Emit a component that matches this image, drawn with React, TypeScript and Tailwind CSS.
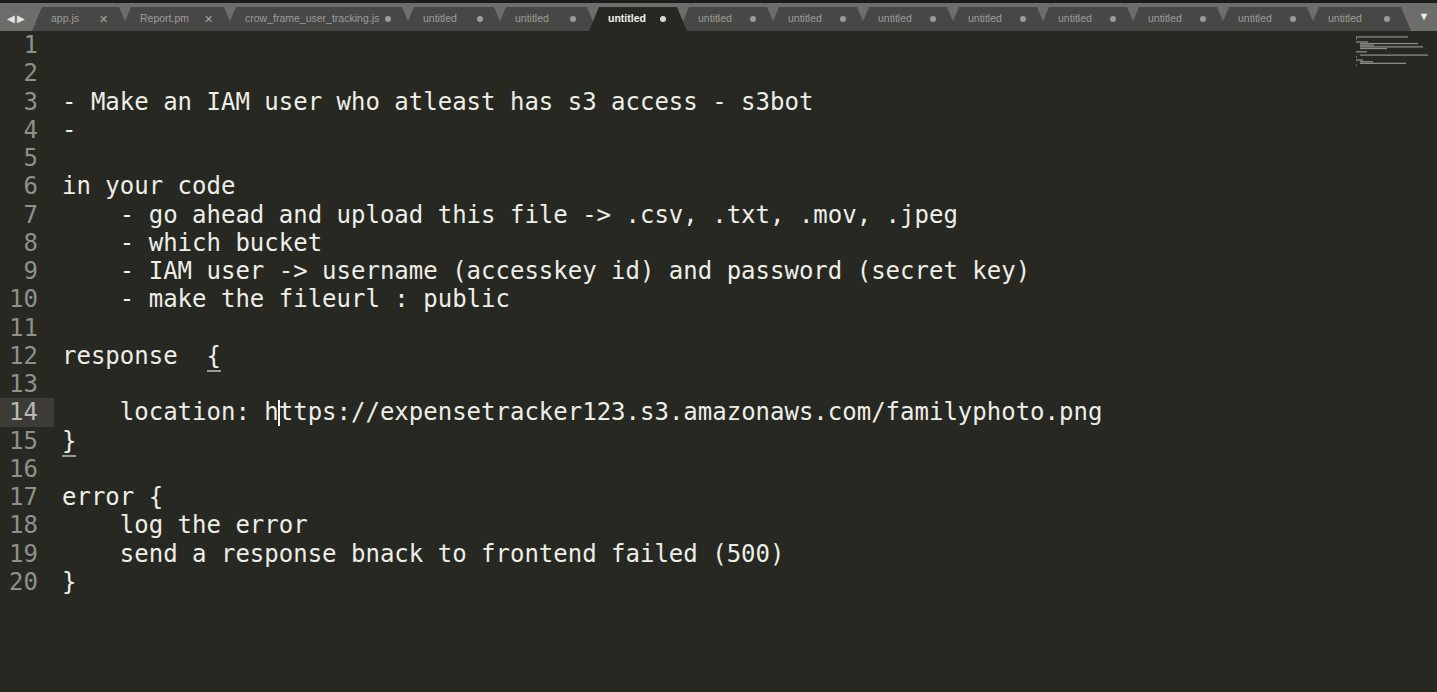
import React from 'react';

type Tab = { label: string; width: number; mark: 'x' | 'dot'; active?: boolean };

const tabs: Tab[] = [
    { label: 'app.js', width: 97, mark: 'x' },
    { label: 'Report.pm', width: 113, mark: 'x' },
    { label: 'crow_frame_user_tracking.js', width: 186, mark: 'dot' },
    { label: 'untitled', width: 100, mark: 'dot' },
    { label: 'untitled', width: 101, mark: 'dot' },
    { label: 'untitled', width: 98, mark: 'dot', active: true },
    { label: 'untitled', width: 98, mark: 'dot' },
    { label: 'untitled', width: 98, mark: 'dot' },
    { label: 'untitled', width: 98, mark: 'dot' },
    { label: 'untitled', width: 98, mark: 'dot' },
    { label: 'untitled', width: 98, mark: 'dot' },
    { label: 'untitled', width: 98, mark: 'dot' },
    { label: 'untitled', width: 98, mark: 'dot' },
    { label: 'untitled', width: 102, mark: 'dot' },
];

const lines = [
    '',
    '',
    '- Make an IAM user who atleast has s3 access - s3bot',
    '-',
    '',
    'in your code',
    '    - go ahead and upload this file -> .csv, .txt, .mov, .jpeg',
    '    - which bucket',
    '    - IAM user -> username (accesskey id) and password (secret key)',
    '    - make the fileurl : public',
    '',
    'response  {',
    '',
    '    location: https://expensetracker123.s3.amazonaws.com/familyphoto.png',
    '}',
    '',
    'error {',
    '    log the error',
    '    send a response bnack to frontend failed (500)',
    '}',
];

const TabItem = ({ tab, first }: { tab: Tab; first: boolean }) => (
    <div
        style={{ width: tab.width }}
        className={`relative flex h-[24px] shrink-0 items-center justify-between pl-[19px] pr-[21px] [clip-path:polygon(10px_0,calc(100%_-_10px)_0,100%_100%,0_100%)] ${first ? '' : '-ml-[8px]'} ${tab.active
            ? 'z-10 bg-[#272822] font-bold text-[#f2f2f2]'
            : 'bg-[#474745] text-[#9c9c9a]'
            }`}
    >
        <span className="truncate">{tab.label}</span>
        {tab.mark === 'x' ? (
            <span className="text-[11px] leading-none text-[#a5a5a3]">✕</span>
        ) : (
            <span className={`h-[6px] w-[6px] rounded-full ${tab.active ? 'bg-[#d8d8d6]' : 'bg-[#9a9a98]'}`} />
        )}
    </div>
);

const Minimap = () => (
    <svg width="80" height="40" viewBox="0 0 80 40" className="absolute right-[1px] top-[2px]">
        {lines.map((line, i) => {
            const lead = line.length - line.trimStart().length;
            const len = line.trim().length;
            if (!len) return null;
            return (
                <rect
                    key={i}
                    x={lead}
                    y={i * 1.65}
                    width={len}
                    height={1.3}
                    fill="#a4a49e"
                    opacity={0.8}
                />
            );
        })}
    </svg>
);

export default function App() {
    return (
        <div className="h-[692px] w-[1437px] overflow-hidden bg-[#272822]">
            {/* tab strip */}
            <div className="h-[31px] border-t-[3px] border-[#1c1c1b] bg-[#6d6d6b] text-[10.5px] font-['Liberation_Sans',sans-serif]">
                <div className="flex h-full items-end">
                    <div className="flex h-full w-[32px] shrink-0 items-center justify-center gap-[2px] pt-[2px] text-[10px] text-[#e4e4e2]">
                        <span>◀</span>
                        <span>▶</span>
                    </div>
                    {tabs.map((t, i) => (
                        <TabItem key={i} tab={t} first={i === 0} />
                    ))}
                    <div className="flex h-full flex-1 items-center justify-center pb-[2px] text-[11px] text-[#f0f0ee]">▼</div>
                </div>
            </div>

            {/* editor */}
            <div className="relative font-['DejaVu_Sans_Mono',monospace] text-[24px] leading-[28.25px]">
                <Minimap />
                {lines.map((line, i) => {
                    const n = i + 1;
                    const current = n === 14;
                    return (
                        <div key={n} className="flex">
                            <div className="w-[62px] shrink-0">
                                <div
                                    className={`w-[54px] pr-[16px] text-right ${current ? 'bg-[#3c3b36] text-[#b9b9b3]' : 'text-[#8f908a]'}`}
                                >
                                    {n}
                                </div>
                            </div>
                            <div className="relative flex-1 whitespace-pre text-[#eeeee8]">
                                {n === 12 ? (
                                    <>
                                        response{'  '}
                                        <span className="border-b-2 border-[#9a9a94]">{'{'}</span>
                                    </>
                                ) : n === 15 ? (
                                    <span className="border-b-2 border-[#9a9a94]">{'}'}</span>
                                ) : n === 14 ? (
                                    <>
                                        {'    location: h'}
                                        <span className="relative">
                                            <span className="absolute -left-[1px] top-[2px] h-[26px] w-[2px] bg-[#f4f4f0]" />
                                        </span>
                                        {'ttps://expensetracker123.s3.amazonaws.com/familyphoto.png'}
                                    </>
                                ) : (
                                    line
                                )}
                            </div>
                        </div>
                    );
                })}
            </div>
        </div>
    );
}
